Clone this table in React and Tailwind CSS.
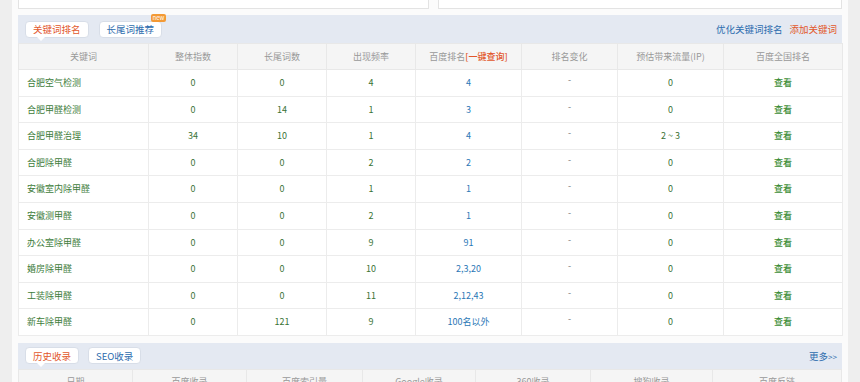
import React from 'react';

const keywordRows = [
  ['合肥空气检测', '0', '0', '4', '4', '-', '0'],
  ['合肥甲醛检测', '0', '14', '1', '3', '-', '0'],
  ['合肥甲醛治理', '34', '10', '1', '4', '-', '2 ~ 3'],
  ['合肥除甲醛', '0', '0', '2', '2', '-', '0'],
  ['安徽室内除甲醛', '0', '0', '1', '1', '-', '0'],
  ['安徽测甲醛', '0', '0', '2', '1', '-', '0'],
  ['办公室除甲醛', '0', '0', '9', '91', '-', '0'],
  ['婚房除甲醛', '0', '0', '10', '2,3,20', '-', '0'],
  ['工装除甲醛', '0', '0', '11', '2,12,43', '-', '0'],
  ['新车除甲醛', '0', '121', '9', '100名以外', '-', '0'],
];

const recordHeads = ['日期', '百度收录', '百度索引量', 'Google收录', '360收录', '搜狗收录', '百度反链'];
const recordCols = ['w-[115px]', 'w-[114px]', 'w-[116px]', 'w-[113px]', 'w-[115px]', 'w-[122px]', 'w-[129px]'];

function Tab({ active, children, badge }) {
  return (
    <div className="relative">
      <div
        className={
          'h-[17px] px-[7px] flex items-center rounded-[4px] bg-white border border-[#d8dee8] text-[9.5px] ' +
          (active ? 'text-[#e2572b]' : 'text-[#2c6cae]')
        }
      >
        {children}
      </div>
      {active && (
        <div className="absolute left-[12px] top-[16px] w-0 h-0 border-x-[4px] border-x-transparent border-t-[4px] border-t-white" />
      )}
      {badge && (
        <div className="absolute left-[52px] top-[-7px] h-[8px] px-[2px] rounded-[2px] bg-[#f39a36] text-white text-[6px] leading-[8px]">
          new
        </div>
      )}
    </div>
  );
}

export default function App() {
  return (
    <div className="w-[860px] h-[382px] overflow-hidden bg-[#eeeeee] font-['Noto_Sans_CJK_SC','Noto_Sans',sans-serif]">
      <div className="ml-[12px] w-[836px] h-full bg-[#fbfbfb] px-[6px]">
        <div className="flex gap-[9px]">
          <div className="w-[411px] h-[9px] bg-white border-x border-b border-[#e3e3e3]" />
          <div className="flex-1 h-[9px] bg-white border-x border-b border-[#e3e3e3]" />
        </div>

        <div className="mt-[6px] h-[28px] bg-[#e4e9f2] flex items-center pl-[7px] pr-[5px]">
          <div className="flex gap-[10px]">
            <Tab active>关键词排名</Tab>
            <Tab badge>长尾词推荐</Tab>
          </div>
          <div className="ml-auto flex gap-[7px] text-[9.5px]">
            <span className="text-[#2c6cae]">优化关键词排名</span>
            <span className="text-[#e2572b]">添加关键词</span>
          </div>
        </div>

        <table className="table-fixed border-collapse w-[824px] bg-white text-[9px]">
          <colgroup>
            <col className="w-[130px]" />
            <col className="w-[89px]" />
            <col className="w-[89px]" />
            <col className="w-[89px]" />
            <col className="w-[106px]" />
            <col className="w-[96px]" />
            <col className="w-[106px]" />
            <col className="w-[119px]" />
          </colgroup>
          <thead>
            <tr className="h-[26px] bg-[#f5f5f5] text-[#999999]">
              <th className="font-normal border border-[#e8e8e8]">关键词</th>
              <th className="font-normal border border-[#e8e8e8]">整体指数</th>
              <th className="font-normal border border-[#e8e8e8]">长尾词数</th>
              <th className="font-normal border border-[#e8e8e8]">出现频率</th>
              <th className="font-normal border border-[#e8e8e8]">
                百度排名<span className="text-[#e2572b] font-medium">[一键查询]</span>
              </th>
              <th className="font-normal border border-[#e8e8e8]">排名变化</th>
              <th className="font-normal border border-[#e8e8e8]">预估带来流量(IP)</th>
              <th className="font-normal border border-[#e8e8e8]">百度全国排名</th>
            </tr>
          </thead>
          <tbody>
            {keywordRows.map((r) => (
              <tr key={r[0]} className="h-[26.6px]">
                <td className="border border-[#ececec] pl-[8px] text-[#3d7c3a]">{r[0]}</td>
                <td className="border border-[#ececec] text-center text-[#3a7334]">{r[1]}</td>
                <td className="border border-[#ececec] text-center text-[#3a7334]">{r[2]}</td>
                <td className="border border-[#ececec] text-center text-[#3a7334]">{r[3]}</td>
                <td className="border border-[#ececec] text-center text-[#2b78b6]">{r[4]}</td>
                <td className="border border-[#ececec] text-center text-[#777777]">
                  <span className="inline-block -translate-y-[3px]">{r[5]}</span>
                </td>
                <td className="border border-[#ececec] text-center text-[#3a7334]">{r[6]}</td>
                <td className="border border-[#ececec] text-center text-[#3c8d36] font-medium">查看</td>
              </tr>
            ))}
          </tbody>
        </table>

        <div className="mt-[7px] h-[26px] bg-[#e4e9f2] flex items-center pl-[7px] pr-[5px]">
          <div className="flex gap-[9px]">
            <Tab active>历史收录</Tab>
            <Tab>SEO收录</Tab>
          </div>
          <span className="ml-auto text-[9.5px] text-[#2c6cae]">
            更多<span className="text-[8px]">&gt;&gt;</span>
          </span>
        </div>

        <div className="flex w-[824px] h-[26px] bg-[#f5f5f5] text-[9px] text-[#999999]">
          {recordHeads.map((h, i) => (
            <div key={h} className={recordCols[i] + ' flex items-center justify-center border border-l-0 first:border-l border-[#e8e8e8]'}>
              {h}
            </div>
          ))}
        </div>
      </div>
    </div>
  );
}
